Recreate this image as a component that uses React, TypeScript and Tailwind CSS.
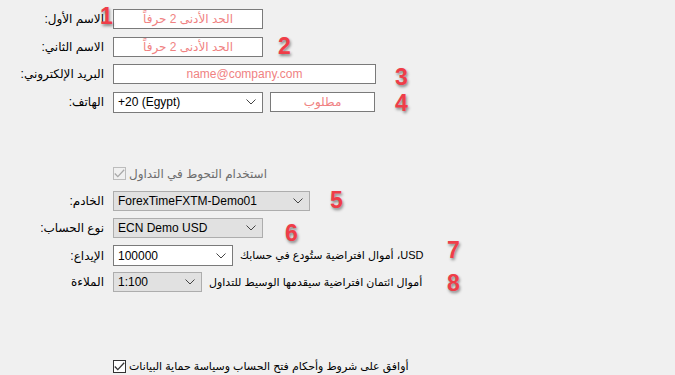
import React from "react";

const Chevron = ({ className = "" }: { className?: string }) => (
  <svg width="10" height="6" viewBox="0 0 10 6" className={className}>
    <path d="M0.5 0.5 L5 5 L9.5 0.5" fill="none" stroke="#444" strokeWidth="1" />
  </svg>
);

const Check = ({ color }: { color: string }) => (
  <svg width="11" height="9" viewBox="0 0 11 9">
    <path d="M0.8 4.5 L3.8 7.6 L10.2 0.8" fill="none" stroke={color} strokeWidth="1.3" />
  </svg>
);

const Label = ({ children }: { children: React.ReactNode }) => (
  <div className="w-[104px] shrink-0 text-right text-[12px] text-black" dir="rtl">
    {children}
  </div>
);

const Field = ({ w, text }: { w: string; text: string }) => (
  <div
    className={`${w} h-[20px] flex items-center justify-center border border-[#7a7a7a] bg-white text-[12px] text-[#f08282]`}
  >
    {text}
  </div>
);

const Select = ({
  w,
  value,
  light,
}: {
  w: string;
  value: string;
  light?: boolean;
}) => (
  <div
    className={
      light
        ? `${w} h-[21px] flex items-center justify-between pl-[4px] pr-[6px] border border-[#7a7a7a] bg-white text-[12px] text-black`
        : `${w} h-[20px] flex items-center justify-between pl-[4px] pr-[6px] border border-[#adadad] bg-[#e1e1e1] text-[12px] text-black`
    }
  >
    <span>{value}</span>
    <Chevron />
  </div>
);

const Num = ({ n, className }: { n: string; className: string }) => (
  <span
    className={`absolute text-[23px] font-bold leading-none text-[#ef3d48] [text-shadow:1px_2px_3px_rgba(0,0,0,0.45)] ${className}`}
    style={{ fontFamily: '"Liberation Sans", Arial, sans-serif' }}
  >
    {n}
  </span>
);

export default function App() {
  return (
    <div
      className="relative w-[675px] h-[375px] overflow-hidden bg-[#f0f0f0] pt-[9px]"
      style={{ fontFamily: '"Liberation Sans", "DejaVu Sans", sans-serif' }}
    >
      <div className="flex items-center h-[20px]">
        <Label>الاسم الأول:</Label>
        <div className="ml-[9px]">
          <Field w="w-[150px]" text="الحد الأدنى 2 حرفاً" />
        </div>
      </div>
      <div className="flex items-center h-[20px] mt-[8px]">
        <Label>الاسم الثاني:</Label>
        <div className="ml-[9px]">
          <Field w="w-[150px]" text="الحد الأدنى 2 حرفاً" />
        </div>
      </div>
      <div className="flex items-center h-[20px] mt-[7px]">
        <Label>البريد الإلكتروني:</Label>
        <div className="ml-[9px]">
          <Field w="w-[263px]" text="name@company.com" />
        </div>
      </div>
      <div className="flex items-center h-[20px] mt-[8px]">
        <Label>الهاتف:</Label>
        <div className="ml-[9px] flex gap-[7px]">
          <Select w="w-[150px]" value="+20 (Egypt)" light />
          <Field w="w-[105px]" text="مطلوب" />
        </div>
      </div>

      <div className="flex items-center h-[13px] mt-[55px] pl-[113px] gap-[3px]">
        <div className="w-[13px] h-[13px] border border-[#bcbcbc] flex items-center justify-center">
          <Check color="#a8a8a8" />
        </div>
        <span className="text-[12px] text-[#6d6d6d]" dir="rtl">
          استخدام التحوط في التداول
        </span>
      </div>

      <div className="flex items-center h-[20px] mt-[11px]">
        <Label>الخادم:</Label>
        <div className="ml-[9px]">
          <Select w="w-[197px]" value="ForexTimeFXTM-Demo01" />
        </div>
      </div>
      <div className="flex items-center h-[20px] mt-[7px]">
        <Label>نوع الحساب:</Label>
        <div className="ml-[9px]">
          <Select w="w-[150px]" value="ECN Demo USD" />
        </div>
      </div>
      <div className="flex items-center h-[21px] mt-[7px]">
        <Label>الإيداع:</Label>
        <div className="ml-[9px] flex items-center gap-[7px]">
          <Select w="w-[120px]" value="100000" light />
          <span className="text-[11px] text-black" dir="rtl">
            USD، أموال افتراضية ستُودع في حسابك
          </span>
        </div>
      </div>
      <div className="flex items-center h-[20px] mt-[6px]">
        <Label>الملاءة</Label>
        <div className="ml-[9px] flex items-center gap-[7px]">
          <Select w="w-[89px]" value="1:100" />
          <span className="text-[11px] text-black" dir="rtl">
            أموال ائتمان افتراضية سيقدمها الوسيط للتداول
          </span>
        </div>
      </div>

      <div className="flex items-center h-[13px] mt-[68px] pl-[113px] gap-[3px]">
        <div className="w-[13px] h-[13px] border border-[#333] bg-white flex items-center justify-center">
          <Check color="#333" />
        </div>
        <span className="text-[11px] text-black" dir="rtl">
          أوافق على شروط وأحكام فتح الحساب وسياسة حماية البيانات
        </span>
      </div>

      <Num n="1" className="left-[100px] top-[5px]" />
      <Num n="2" className="left-[278px] top-[35px]" />
      <Num n="3" className="left-[395px] top-[66px]" />
      <Num n="4" className="left-[395px] top-[92px]" />
      <Num n="5" className="left-[330px] top-[189px]" />
      <Num n="6" className="left-[285px] top-[222px]" />
      <Num n="7" className="left-[447px] top-[239px]" />
      <Num n="8" className="left-[447px] top-[272px]" />
    </div>
  );
}
